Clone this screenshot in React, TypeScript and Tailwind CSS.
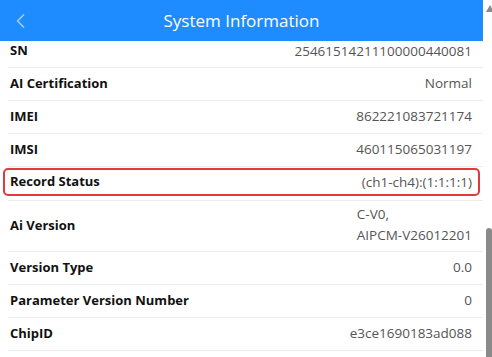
import React from 'react';

interface InfoRow {
  label: string;
  value: string[];
  highlight?: boolean;
}

const rows: InfoRow[] = [
  { label: 'AI Certification', value: ['Normal'] },
  { label: 'IMEI', value: ['862221083721174'] },
  { label: 'IMSI', value: ['460115065031197'] },
  { label: 'Record Status', value: ['(ch1-ch4):(1:1:1:1)'], highlight: true },
  { label: 'Ai Version', value: ['C-V0,', 'AIPCM-V26012201'] },
  { label: 'Version Type', value: ['0.0'] },
  { label: 'Parameter Version Number', value: ['0'] },
  { label: 'ChipID', value: ['e3ce1690183ad088'] },
];

const App: React.FC = () => {
  return (
    <div
      className="w-[492px] h-[357px] overflow-hidden bg-white flex"
      style={{ fontFamily: '"Open Sans", "Noto Sans", sans-serif' }}
    >
      <div className="w-[483px] flex flex-col">
        {/* Header */}
        <div className="h-[41px] shrink-0 bg-[#1e8cff] flex items-center relative z-10">
          <svg className="ml-[15px] mt-[1px]" width="12" height="16" viewBox="0 0 12 16" fill="none">
            <path d="M9 1.5L2.5 8L9 14.5" stroke="#a9d2ff" strokeWidth="1.4" />
          </svg>
          <span className="absolute left-0 right-0 text-center text-white text-[17px] leading-none pointer-events-none">
            System Information
          </span>
        </div>

        {/* List */}
        <div className="flex-1 overflow-hidden">
          <div className="-mt-[6px]">
            <div className="h-[33px] flex items-center justify-between pr-[11px] border-b border-[#ececec] ml-[8px]">
              <span className="ml-[2px] text-[13px] font-bold text-[#111]">SN</span>
              <span className="text-[13.5px] text-[#555]">25461514211100000440081</span>
            </div>
            {rows.map((row) =>
              row.highlight ? (
                <div key={row.label} className="pt-[1px] pb-[4px] border-b border-[#ececec] ml-[8px]">
                  <div className="-ml-[5px] mr-[3px] h-[28px] border-2 border-[#e0393e] rounded-[5px] flex items-center justify-between pl-[5px] pr-[6px]">
                    <span className="text-[13px] font-bold text-[#111]">{row.label}</span>
                    <span className="text-[13.5px] text-[#555]">{row.value[0]}</span>
                  </div>
                </div>
              ) : (
                <div
                  key={row.label}
                  className={`${row.value.length > 1 ? 'h-[51px]' : 'h-[33px]'} flex items-center justify-between pr-[11px] border-b border-[#ececec] ml-[8px]`}
                >
                  <span className="ml-[2px] text-[13px] font-bold text-[#111]">{row.label}</span>
                  <div className="text-[13.5px] text-[#555] leading-[21px] text-left -mt-[2px]">
                    {row.value.map((v) => (
                      <div key={v}>{v}</div>
                    ))}
                  </div>
                </div>
              )
            )}
          </div>
        </div>
      </div>

      {/* Scrollbar */}
      <div className="w-[9px] flex flex-col relative">
        <svg className="mt-[5px] ml-[3px]" width="8" height="7" viewBox="0 0 8 7">
          <path d="M4 0L8 7H0Z" fill="#8a8a8a" />
        </svg>
        <div className="flex-1" />
        <div className="h-[129px] ml-[3px] w-[6px] bg-[#8a8a8a] rounded-t-[3px]" />
      </div>
    </div>
  );
};

export default App;
